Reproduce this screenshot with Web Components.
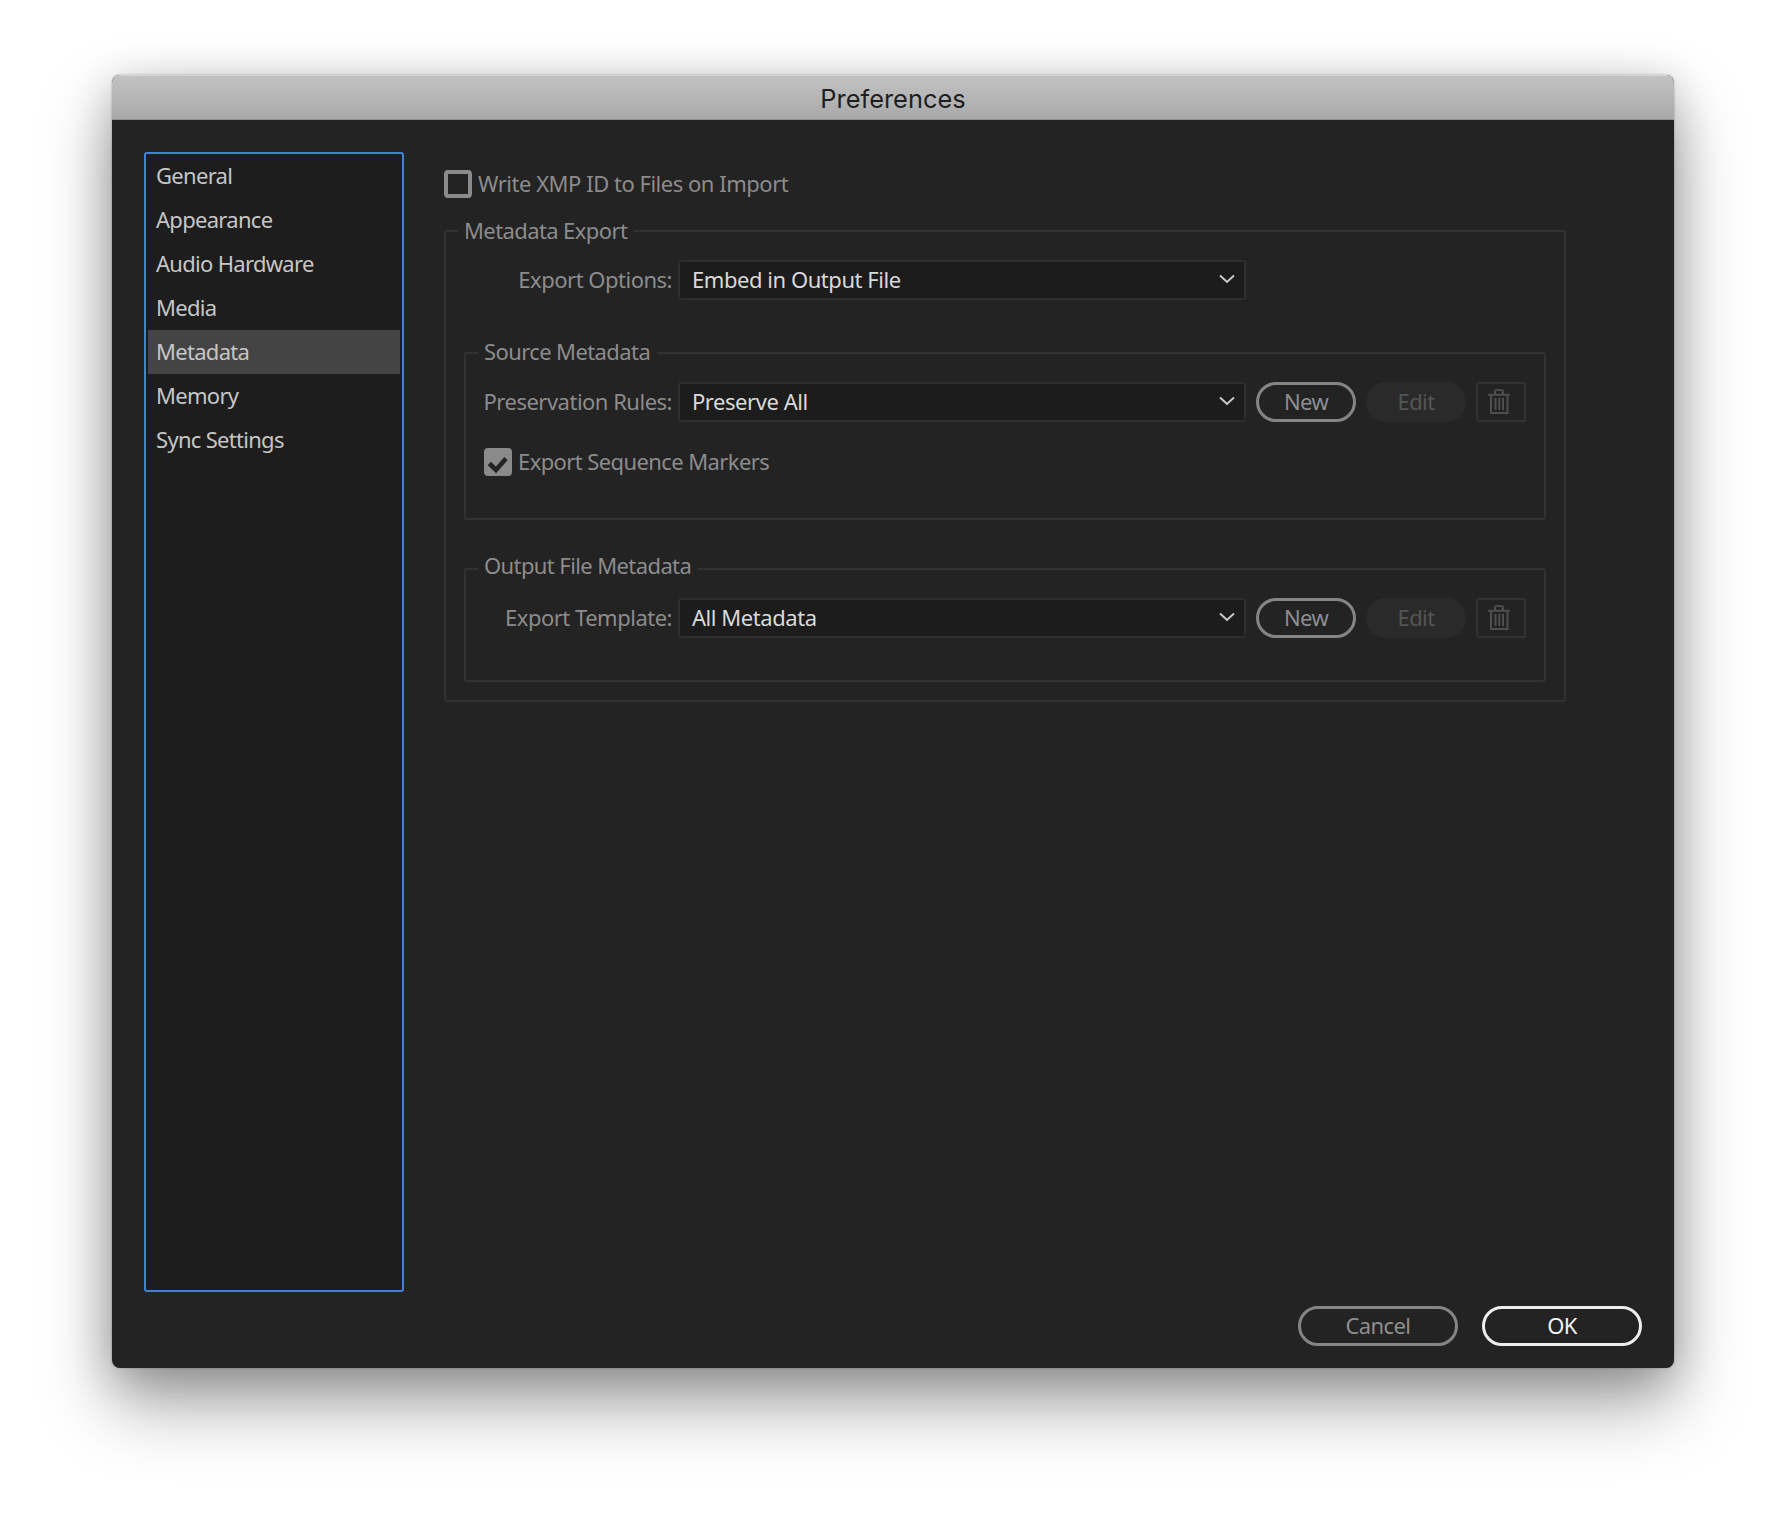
<!DOCTYPE html>
<html lang="en">
<head>
<meta charset="utf-8">
<title>Preferences</title>
<style>
  html, body { margin: 0; padding: 0; background: #fff; }
  body {
    width: 1786px;
    height: 1516px;
    overflow: hidden;
    padding: 75px 0 0 112px;
    box-sizing: border-box;
    font-family: "Noto Sans", "Open Sans", sans-serif;
    font-size: 22px;
    letter-spacing: -0.6px;
  }
</style>
</head>
<body>
<pref-dialog heading="Preferences">
  <pref-list slot="nav">
    <pref-item>General</pref-item>
    <pref-item>Appearance</pref-item>
    <pref-item>Audio Hardware</pref-item>
    <pref-item>Media</pref-item>
    <pref-item selected>Metadata</pref-item>
    <pref-item>Memory</pref-item>
    <pref-item>Sync Settings</pref-item>
  </pref-list>

  <pref-check style="margin: 18px 0 18px; letter-spacing: -0.48px">Write XMP ID to Files on Import</pref-check>

  <pref-group legend="Metadata Export" style="--label-w: 226px; --pad: 0 18px 18px 0">
    <pref-row label="Export Options:" value="Embed in Output File" plain></pref-row>

    <pref-group legend="Source Metadata" style="--label-w: 206px; --pad: 0 0 42px 0; --legend-lh: 26px; margin: 38px 0 0 18px">
      <pref-row label="Preservation Rules:" value="Preserve All"></pref-row>
      <pref-check checked style="margin: 26px 0 0 18px">Export Sequence Markers</pref-check>
    </pref-group>

    <pref-group legend="Output File Metadata" style="--label-w: 206px; --pad: 0 0 42px 0; --legend-lh: 22px; margin: 34px 0 0 18px">
      <pref-row label="Export Template:" value="All Metadata"></pref-row>
    </pref-group>
  </pref-group>

  <pref-button slot="footer">Cancel</pref-button>
  <pref-button slot="footer" primary>OK</pref-button>
</pref-dialog>

<script>
class PrefDialog extends HTMLElement {
  constructor () {
    super()
    this.shadowDOM = this.attachShadow({ mode: 'open' })
  }

  connectedCallback () {
    this.shadowDOM.innerHTML = `
      <style>
        :host {
          display: flex;
          flex-direction: column;
          width: 1562px;
          height: 1293px;
          border-radius: 8px;
          background: #232323;
          box-shadow: 0 0 2px rgba(0, 0, 0, .35), 0 36px 70px rgba(0, 0, 0, .36), 0 8px 44px rgba(0, 0, 0, .2);
        }
        header {
          box-sizing: border-box;
          height: 45px;
          flex: none;
          display: flex;
          align-items: center;
          justify-content: center;
          padding-top: 2px;
          border-radius: 8px 8px 0 0;
          border-top: 1px solid #d6d6d6;
          border-bottom: 1px solid #8f8f8f;
          background: linear-gradient(#c2c2c2, #a9a9a9);
          color: #1f1f1f;
          font-family: Inter, "Liberation Sans", Arial, sans-serif;
          font-size: 25.4px;
          letter-spacing: 0;
        }
        .content {
          display: flex;
          gap: 40px;
          padding: 32px 0 0 32px;
        }
        main { width: 1122px; }
        footer {
          display: flex;
          justify-content: flex-end;
          gap: 24px;
          margin-top: 14px;
          padding-right: 32px;
        }
      </style>
      <header>${this.getAttribute('heading')}</header>
      <div class="content">
        <slot name="nav"></slot>
        <main><slot></slot></main>
      </div>
      <footer><slot name="footer"></slot></footer>
    `
  }
}

class PrefList extends HTMLElement {
  constructor () {
    super()
    this.shadowDOM = this.attachShadow({ mode: 'open' })
  }

  connectedCallback () {
    this.shadowDOM.innerHTML = `
      <style>
        :host {
          display: block;
          box-sizing: border-box;
          width: 260px;
          height: 1140px;
          padding: 0 2px;
          border: 2px solid #3f82d6;
          border-radius: 3px;
          background: #1d1d1d;
          letter-spacing: -0.7px;
        }
      </style>
      <slot></slot>
    `
  }
}

class PrefItem extends HTMLElement {
  constructor () {
    super()
    this.shadowDOM = this.attachShadow({ mode: 'open' })
  }

  connectedCallback () {
    this.shadowDOM.innerHTML = `
      <style>
        :host {
          display: flex;
          align-items: center;
          box-sizing: border-box;
          height: 44px;
          padding: 0 0 2px 8px;
          color: #c6c6c6;
        }
        :host([selected]) { background: #444; }
      </style>
      <slot></slot>
    `
  }
}

class PrefCheck extends HTMLElement {
  constructor () {
    super()
    this.shadowDOM = this.attachShadow({ mode: 'open' })
  }

  connectedCallback () {
    const tick = this.hasAttribute('checked')
      ? '<svg width="28" height="28" viewBox="0 0 28 28"><path d="M5.300 15.500l6.700 6.500L22 10.500" fill="none" stroke="#232323" stroke-width="4.600"/></svg>'
      : ''
    this.shadowDOM.innerHTML = `
      <style>
        :host {
          display: flex;
          align-items: center;
          gap: 6px;
          height: 28px;
          color: #8c8c8c;
        }
        .box {
          box-sizing: border-box;
          width: 28px;
          height: 28px;
          flex: none;
          border: 4px solid #8a8a8a;
          border-radius: 4px;
        }
        :host([checked]) .box { border: 0; background: #8a8a8a; }
        svg { display: block; }
        .text { margin-bottom: 2px; }
      </style>
      <span class="box">${tick}</span>
      <span class="text"><slot></slot></span>
    `
  }
}

class PrefGroup extends HTMLElement {
  constructor () {
    super()
    this.shadowDOM = this.attachShadow({ mode: 'open' })
  }

  connectedCallback () {
    this.shadowDOM.innerHTML = `
      <style>
        :host { display: block; }
        fieldset {
          margin: 0;
          padding: var(--pad);
          border: 2px solid #323232;
          border-radius: 3px;
        }
        legend {
          height: 30px;
          line-height: var(--legend-lh, 29px);
          margin-left: 12px;
          padding: 0 7px 0 6px;
          color: #8c8c8c;
        }
        .body { padding-top: 14px; }
      </style>
      <fieldset>
        <legend>${this.getAttribute('legend')}</legend>
        <div class="body"><slot></slot></div>
      </fieldset>
    `
  }
}

class PrefRow extends HTMLElement {
  constructor () {
    super()
    this.shadowDOM = this.attachShadow({ mode: 'open' })
  }

  connectedCallback () {
    const actions = this.hasAttribute('plain')
      ? ''
      : `<pref-button small>New</pref-button>
         <pref-button small disabled>Edit</pref-button>
         <pref-trash></pref-trash>`
    this.shadowDOM.innerHTML = `
      <style>
        :host {
          display: flex;
          align-items: center;
          gap: 10px;
          height: 40px;
        }
        .label {
          box-sizing: border-box;
          width: calc(var(--label-w) + 6px);
          margin: 0 -10px 2px 0;
          padding-right: 6px;
          text-align: right;
          color: #8c8c8c;
          white-space: nowrap;
          letter-spacing: -0.5px;
        }
      </style>
      <span class="label">${this.getAttribute('label')}</span>
      <pref-select>${this.getAttribute('value')}</pref-select>
      ${actions}
    `
  }
}

class PrefSelect extends HTMLElement {
  constructor () {
    super()
    this.shadowDOM = this.attachShadow({ mode: 'open' })
  }

  connectedCallback () {
    this.shadowDOM.innerHTML = `
      <style>
        :host {
          display: flex;
          align-items: center;
          justify-content: space-between;
          box-sizing: border-box;
          width: 568px;
          height: 40px;
          padding: 0 9px 0 12px;
          border: 2px solid #2f2f2f;
          border-radius: 3px;
          background: #1c1c1c;
          color: #d9d9d9;
          letter-spacing: -0.45px;
        }
        span { margin-bottom: 2px; }
        svg { display: block; margin-top: -2px; }
      </style>
      <span><slot></slot></span>
      <svg width="16" height="10" viewBox="0 0 16 10"><path d="M1 1.500l7 6.500 7-6.500" fill="none" stroke="#c8c8c8" stroke-width="2"/></svg>
    `
  }
}

class PrefButton extends HTMLElement {
  constructor () {
    super()
    this.shadowDOM = this.attachShadow({ mode: 'open' })
  }

  connectedCallback () {
    this.shadowDOM.innerHTML = `
      <style>
        :host {
          display: flex;
          align-items: center;
          justify-content: center;
          box-sizing: border-box;
          width: 160px;
          height: 40px;
          padding-bottom: 2px;
          border: 3px solid #858585;
          border-radius: 20px;
          color: #8e8e8e;
        }
        :host([small]) { width: 100px; }
        :host([primary]) { border-color: #eee; color: #f2f2f2; }
        :host([disabled]) { border: 0; background: #2a2a2a; color: #555; }
      </style>
      <slot></slot>
    `
  }
}

class PrefTrash extends HTMLElement {
  constructor () {
    super()
    this.shadowDOM = this.attachShadow({ mode: 'open' })
  }

  connectedCallback () {
    this.shadowDOM.innerHTML = `
      <style>
        :host {
          display: block;
          box-sizing: border-box;
          width: 50px;
          height: 40px;
          border: 2px solid #323232;
          border-radius: 3px;
        }
        svg { display: block; }
      </style>
      <svg width="46" height="36" viewBox="0 0 46 36" fill="none" stroke="#4e4e4e" stroke-width="2">
        <path d="M10 10.700h22M13 10.700V29h16.500V10.700M17 10.700V8q0-2 2-2h4q2 0 2 2v2.700M17.500 14v12M21.300 14v12M25 14v12"/>
      </svg>
    `
  }
}

customElements.define('pref-dialog', PrefDialog)
customElements.define('pref-list', PrefList)
customElements.define('pref-item', PrefItem)
customElements.define('pref-check', PrefCheck)
customElements.define('pref-group', PrefGroup)
customElements.define('pref-row', PrefRow)
customElements.define('pref-select', PrefSelect)
customElements.define('pref-button', PrefButton)
customElements.define('pref-trash', PrefTrash)
</script>
</body>
</html>
